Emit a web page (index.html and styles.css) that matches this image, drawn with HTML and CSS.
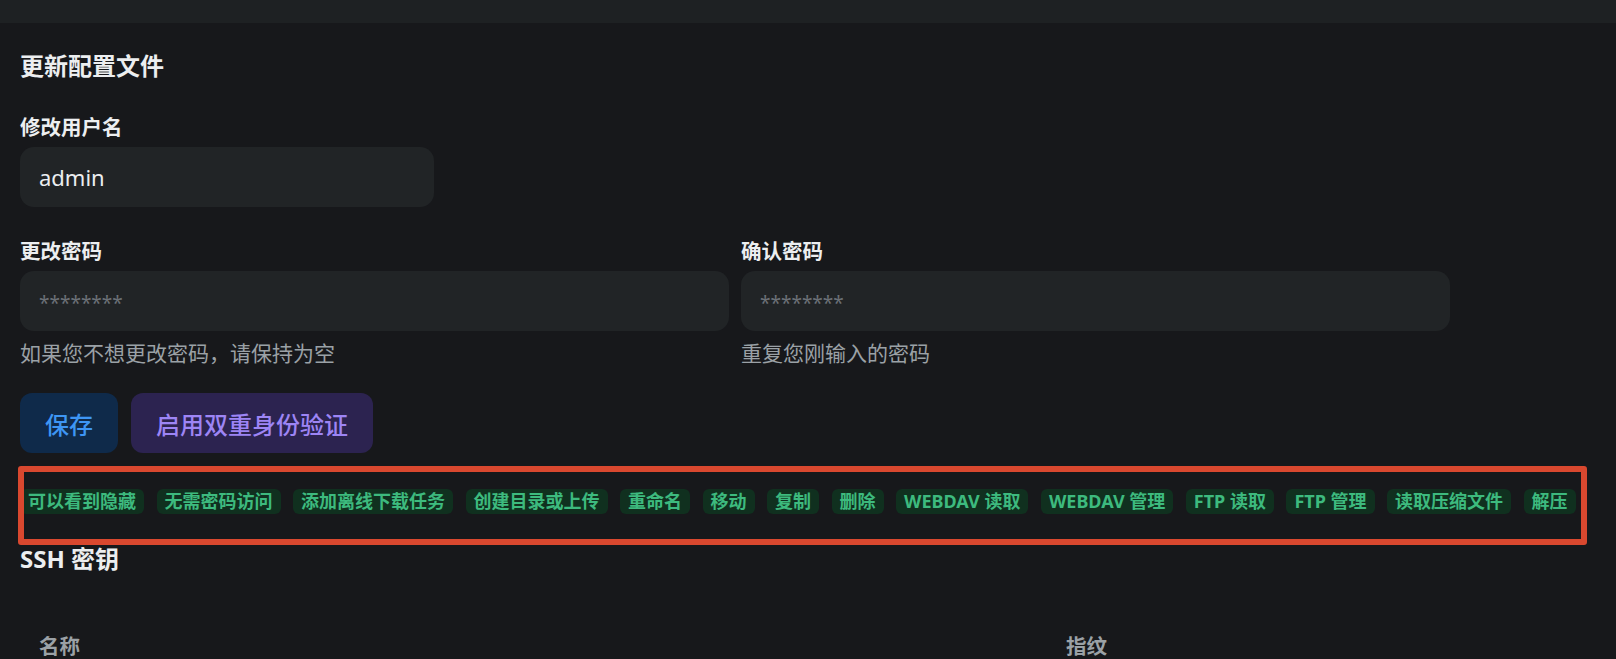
FILE: index.html
```html
<html>
<head>
    <meta charset="UTF-8" />
    <meta name="viewport" content="width=device-width, initial-scale=1.0" />
    <title>个人资料</title>
    <link rel="stylesheet" href="styles.css">
</head>
<body>
    <div class="topbar"></div>
    <div class="page">
        <h2 class="title">更新配置文件</h2>

        <div class="field field-user">
            <label class="field-label" for="username">修改用户名</label>
            <input class="input" id="username" type="text" value="admin">
        </div>

        <div class="pw-grid">
            <div class="field">
                <label class="field-label" for="password">更改密码</label>
                <input class="input" id="password" type="password" placeholder="********">
                <div class="helper">如果您不想更改密码，请保持为空</div>
            </div>
            <div class="field">
                <label class="field-label" for="confirm">确认密码</label>
                <input class="input" id="confirm" type="password" placeholder="********">
                <div class="helper">重复您刚输入的密码</div>
            </div>
        </div>

        <div class="actions">
            <button class="btn btn-save">保存</button>
            <button class="btn btn-2fa">启用双重身份验证</button>
        </div>

        <div class="perm-wrap">
            <div class="perms">
                <span class="tag">可以看到隐藏</span>
                <span class="tag">无需密码访问</span>
                <span class="tag">添加离线下载任务</span>
                <span class="tag">创建目录或上传</span>
                <span class="tag">重命名</span>
                <span class="tag">移动</span>
                <span class="tag">复制</span>
                <span class="tag">删除</span>
                <span class="tag">WEBDAV 读取</span>
                <span class="tag">WEBDAV 管理</span>
                <span class="tag">FTP 读取</span>
                <span class="tag">FTP 管理</span>
                <span class="tag">读取压缩文件</span>
                <span class="tag">解压</span>
            </div>
        </div>

        <h2 class="title ssh-title">SSH 密钥</h2>

        <table class="keys">
            <tr>
                <th class="col-name">名称</th>
                <th>指纹</th>
            </tr>
        </table>
    </div>
</body>
</html>
```

FILE: styles.css
```css
body {
    margin: 0;
    background: #17181b;
    color: #eceef0;
    font-family: "Noto Sans", "Noto Sans CJK SC", sans-serif;
}
.topbar {
    height: 23px;
    background: #1e2123;
}
.page {
    padding: 27px 20px 0 20px;
}
.title {
    margin: 0;
    font-size: 24px;
    line-height: 32px;
    font-weight: 700;
}
.field-label {
    display: block;
    font-size: 20.5px;
    line-height: 28px;
    font-weight: 600;
    margin-bottom: 6px;
}
.field-user {
    width: 414px;
    margin-top: 31px;
}
.input {
    box-sizing: border-box;
    display: block;
    width: 100%;
    height: 60px;
    padding: 0 19px;
    border: none;
    border-radius: 14px;
    background: #212426;
    color: #eceef0;
    font-family: inherit;
    font-size: 22px;
    outline: none;
}
.input::placeholder {
    color: #6b7076;
    font-size: 19px;
}
.pw-grid {
    display: grid;
    grid-template-columns: 709px 709px;
    gap: 12px;
    margin-top: 30px;
}
.helper {
    margin-top: 8px;
    font-size: 21px;
    line-height: 28px;
    color: #9ba1a6;
}
.actions {
    display: flex;
    gap: 13px;
    margin-top: 26px;
}
.btn {
    height: 60px;
    padding: 0 25px;
    border: none;
    border-radius: 12px;
    font-family: inherit;
    font-size: 24px;
    font-weight: 500;
}
.btn-save {
    background: #0f2a4a;
    color: #3e96f4;
}
.btn-2fa {
    background: #2c2350;
    color: #9d85f5;
}
.perm-wrap {
    position: relative;
    margin-top: 36px;
}
/* annotation frame drawn over the permission row */
.perm-wrap::after {
    content: "";
    position: absolute;
    top: -23px;
    bottom: -31px;
    left: -2px;
    width: 1569px;
    box-sizing: border-box;
    border: 6px solid #d9482f;
    border-radius: 3px;
}
.perms {
    display: flex;
    flex-wrap: wrap;
    gap: 12.5px;
}
.tag {
    padding: 0 8px;
    border-radius: 6px;
    background: #10301f;
    color: #3dba7e;
    font-size: 18px;
    line-height: 25px;
    font-weight: 700;
    white-space: nowrap;
}
.ssh-title {
    margin-top: 29px;
}
.keys {
    width: 100%;
    margin-top: 57px;
    border-collapse: collapse;
}
.keys th {
    padding: 0 19px;
    text-align: left;
    font-size: 20.5px;
    line-height: 28px;
    font-weight: 700;
    color: #9ba1a6;
}
.col-name {
    width: 1027px;
    box-sizing: border-box;
}
```
